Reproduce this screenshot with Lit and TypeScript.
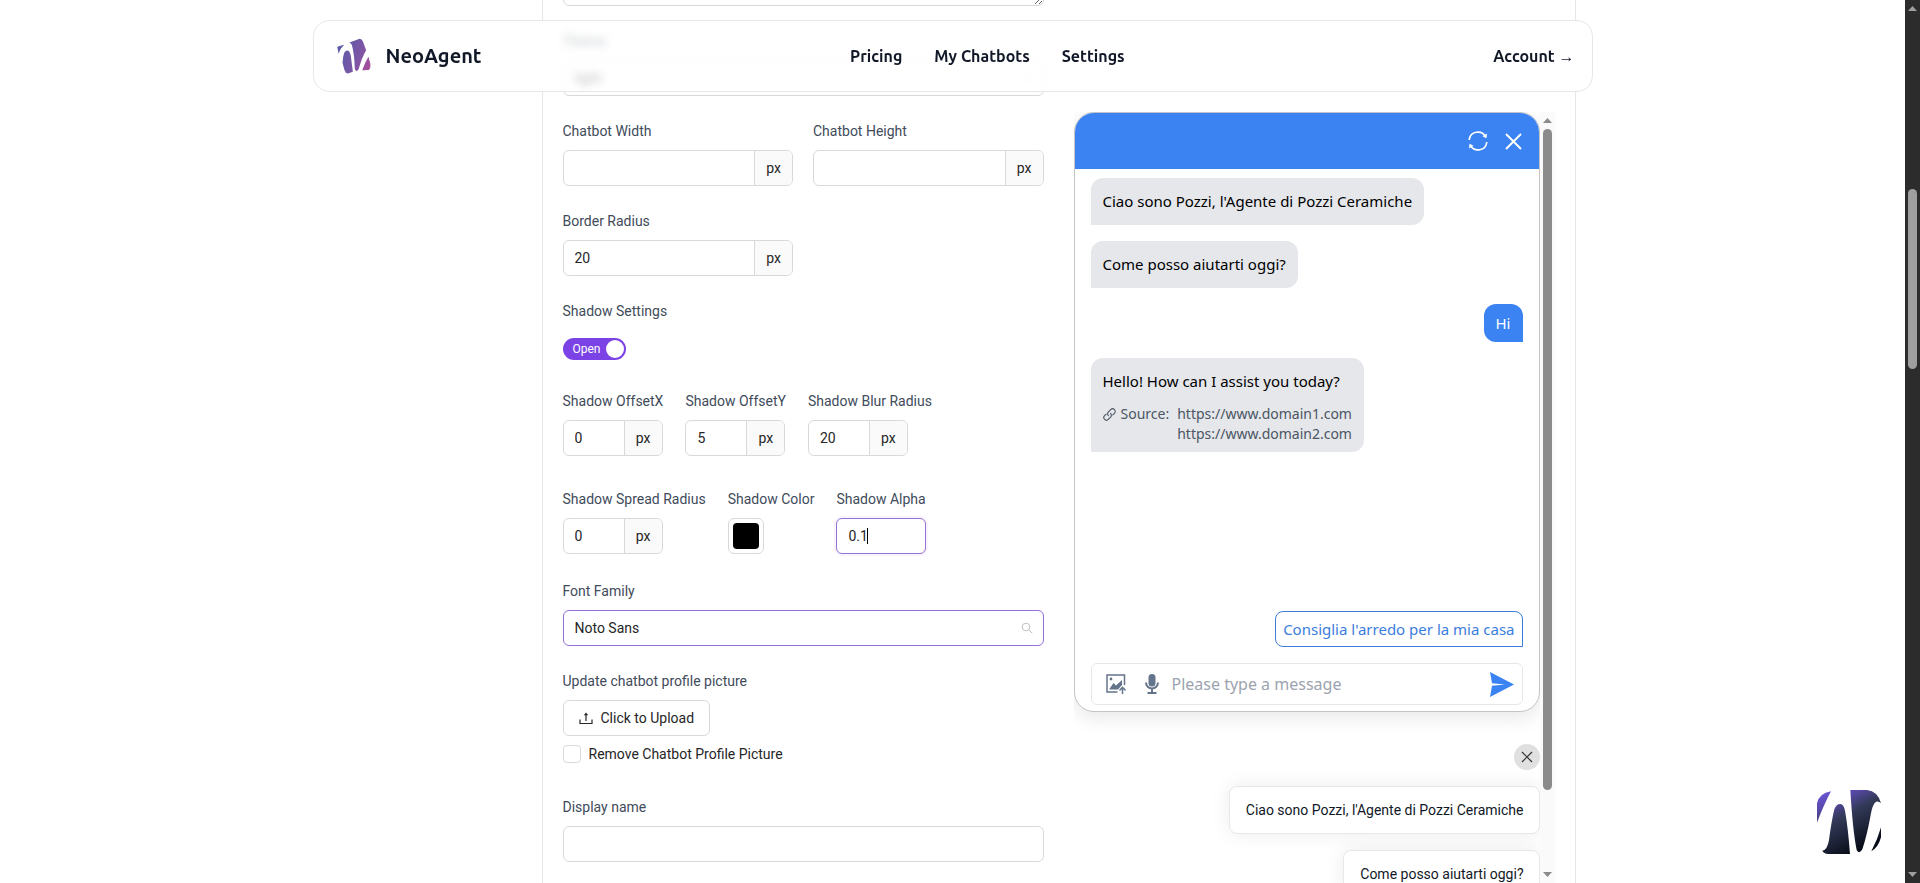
import { LitElement, html, css } from "lit";
import { customElement, property } from "lit/decorators.js";

@customElement("unit-field")
class UnitField extends LitElement {
  @property() label = "";
  @property() value = "";
  @property({ type: Boolean, reflect: true }) compact = false;

  static styles = css`
    :host { display: flex; flex-direction: column; gap: 8px; min-width: 0; }
    label { font-size: 14px; line-height: 22px; color: #414b5a; white-space: nowrap; }
    .group { display: flex; height: 36px; box-sizing: border-box; border: 1px solid #d9d9d9; border-radius: 6px; overflow: hidden; background: #fff; }
    :host([compact]) .group { width: 100px; }
    input { flex: 1; min-width: 0; border: 0; outline: 0; padding: 0 11px; font: 14px Roboto, sans-serif; color: #262626; background: transparent; }
    .unit { box-sizing: border-box; width: 38px; flex: none; border-left: 1px solid #d9d9d9; background: #fafafa; display: grid; place-items: center; font-size: 14px; color: #262626; }
  `;

  render() {
    return html`
      <label for="field">${this.label}</label>
      <div class="group">
        <input id="field" type="text" .value=${this.value} />
        <span class="unit">px</span>
      </div>
    `;
  }
}

@customElement("scroll-rail")
class ScrollRail extends LitElement {
  @property({ reflect: true }) tone = "light";

  static styles = css`
    :host { display: grid; grid-template-rows: 17px 0fr 660fr 76fr 17px; justify-items: center; width: 15px; background: #fafafa; color: #8b8b8b; }
    :host([tone="dark"]) { background: #2c2c2c; color: #9f9f9f; grid-template-rows: 17px 172fr 180fr 497fr 17px; }
    .thumb { grid-row: 3; width: 9px; border-radius: 5px; background: currentColor; }
    svg { width: 9px; height: 5px; align-self: center; }
    .down { grid-row: 5; }
  `;

  render() {
    return html`
      <svg viewBox="0 0 9 5" aria-hidden="true"><path d="M0 5 4.500 0 9 5z" fill="currentColor" /></svg>
      <div class="thumb"></div>
      <svg class="down" viewBox="0 0 9 5" aria-hidden="true"><path d="M0 0h9L4.500 5z" fill="currentColor" /></svg>
    `;
  }
}

@customElement("site-header")
class SiteHeader extends LitElement {
  static styles = css`
    :host { display: flex; justify-content: space-between; align-items: center; box-sizing: border-box; height: 72px; padding: 0 17px 0 23px; border: 1px solid #e5e7eb; border-radius: 16px; background: rgba(255, 255, 255, 0.7); backdrop-filter: blur(4px); font-family: Ubuntu, "Noto Sans", sans-serif; }
    a { color: #111827; text-decoration: none; font-size: 16px; line-height: 24px; font-weight: 600; white-space: nowrap; }
    .brand { display: flex; align-items: center; gap: 15px; font-size: 20px; line-height: 28px; }
    .brand svg { width: 34px; height: 36px; }
    nav { display: flex; gap: 32px; }
  `;

  render() {
    return html`
      <a class="brand" href="#">
        <svg viewBox="0 0 105 108" aria-hidden="true">
          <defs>
            <linearGradient id="v" x1="0" y1="50" x2="105" y2="90" gradientUnits="userSpaceOnUse">
              <stop offset="0" stop-color="#5c5aa6" /><stop offset="0.55" stop-color="#7a56a6" /><stop offset="1" stop-color="#ab4c98" />
            </linearGradient>
          </defs>
          <g fill="url(#v)">
            <path d="M1 27Q2 24 8 23L22 19Q9 31 5 47Z" />
            <path d="M22 45Q27 34 35 38Q42 42 44 64L49 103L34 108Q26 107 23 97L17 75Q18 57 22 45Z" />
            <path d="M38 12L70 1Q77 1 80 9L90 36Q77 58 67 94Q60 106 55 94Q54 50 46 20Q43 14 38 12Z" />
            <path d="M97 56L103 78Q104 93 98 97L78 98Q85 76 97 56Z" />
          </g>
        </svg>
        NeoAgent
      </a>
      <nav>
        <a href="#">Pricing</a>
        <a href="#">My Chatbots</a>
        <a href="#">Settings</a>
      </nav>
      <a href="#">Account →</a>
    `;
  }
}

@customElement("style-form")
class StyleForm extends LitElement {
  static styles = css`
    :host { display: flex; flex-direction: column; gap: 24px; min-width: 0; color: #262626; font-size: 14px; line-height: 22px; }
    .row { display: grid; grid-template-columns: 1fr 1fr; gap: 20px; }
    .inline { display: flex; gap: 22px; margin-bottom: 2px; }
    .spaced { margin-bottom: 8px; }
    .field { display: flex; flex-direction: column; gap: 8px; }
    label, .caption { color: #414b5a; white-space: nowrap; }
    input[type="text"], select, textarea { box-sizing: border-box; width: 100%; height: 36px; border: 1px solid #d9d9d9; border-radius: 6px; padding: 0 11px; font: 14px Roboto, sans-serif; color: #262626; background: #fff; outline: 0; appearance: none; display: block; }
    textarea { height: 64px; margin-top: -58px; }
    .wrap { position: relative; }
    .wrap svg { position: absolute; right: 11px; top: 12px; width: 12px; height: 12px; pointer-events: none; }
    .active input[type="text"], .active select { border-color: #9570d5; }
    .alpha { width: 90px; }
    .alpha input[type="text"] { box-shadow: 0 0 0 2px rgba(149, 112, 213, 0.08); }
    .caret { position: absolute; left: 31px; top: 10px; width: 1px; height: 16px; background: #000; }
    .switch { display: flex; align-items: center; box-sizing: border-box; height: 36px; padding-top: 2px; }
    .toggle { display: flex; align-items: center; justify-content: space-between; width: 63px; height: 22px; padding: 0 2px 0 10px; border: 0; border-radius: 11px; background: #7b43e5; color: #fff; font: 12px Roboto, sans-serif; }
    .knob { width: 18px; height: 18px; border-radius: 9px; background: #fff; }
    .swatch { box-sizing: border-box; width: 36px; height: 36px; padding: 4px; border: 1px solid #d9d9d9; border-radius: 6px; background: #fff; appearance: none; }
    .swatch::-webkit-color-swatch-wrapper { padding: 0; }
    .swatch::-webkit-color-swatch { border: 0; border-radius: 4px; }
    .upload { display: flex; align-items: center; gap: 8px; align-self: start; height: 36px; padding: 0 15px; border: 1px solid #d9d9d9; border-radius: 6px; background: #fff; font: 14px Roboto, sans-serif; color: #262626; }
    .upload svg { width: 14px; height: 14px; }
    .check { display: flex; align-items: center; gap: 8px; line-height: 20px; color: #262626; }
    .check input { appearance: none; width: 18px; height: 18px; margin: 0; border: 1px solid #d9d9d9; border-radius: 4px; background: #fff; box-sizing: border-box; }
    .picture { margin-bottom: 8px; }
  `;

  render() {
    return html`
      <div class="field"><textarea aria-label="Prompt"></textarea></div>
      <div class="field">
        <label for="theme">Theme</label>
        <div class="wrap">
          <select id="theme"><option>light</option></select>
          <svg viewBox="0 0 12 12" fill="none" stroke="#bfbfbf"><path d="m1.500 3.500 4.500 5 4.500-5" /></svg>
        </div>
      </div>
      <div class="row">
        <unit-field label="Chatbot Width"></unit-field>
        <unit-field label="Chatbot Height"></unit-field>
      </div>
      <div class="row"><unit-field label="Border Radius" value="20"></unit-field></div>
      <div class="field">
        <span class="caption" id="shadow">Shadow Settings</span>
        <div class="switch">
          <button class="toggle" role="switch" aria-checked="true" aria-labelledby="shadow">Open<span class="knob"></span></button>
        </div>
      </div>
      <div class="inline spaced">
        <unit-field compact label="Shadow OffsetX" value="0"></unit-field>
        <unit-field compact label="Shadow OffsetY" value="5"></unit-field>
        <unit-field compact label="Shadow Blur Radius" value="20"></unit-field>
      </div>
      <div class="inline">
        <unit-field compact label="Shadow Spread Radius" value="0"></unit-field>
        <div class="field">
          <label for="color">Shadow Color</label>
          <input class="swatch" id="color" type="color" value="#000000" />
        </div>
        <div class="field">
          <label for="alpha">Shadow Alpha</label>
          <div class="wrap active alpha"><input id="alpha" type="text" value="0.1" /><span class="caret"></span></div>
        </div>
      </div>
      <div class="field">
        <label for="font">Font Family</label>
        <div class="wrap active">
          <select id="font"><option>Noto Sans</option></select>
          <svg viewBox="0 0 12 12" fill="none" stroke="#bfbfbf"><circle cx="5" cy="5" r="3.800" /><path d="m7.800 7.800 3.500 3.500" /></svg>
        </div>
      </div>
      <div class="field picture">
        <span class="caption">Update chatbot profile picture</span>
        <button class="upload">
          <svg viewBox="0 0 14 14" fill="none" stroke="#262626" stroke-width="1.200"><path d="M1 8.500v4h12v-4M7 10V3.500" /><path d="M4.800 4.300 7 1.500l2.200 2.800z" fill="#262626" stroke="none" /></svg>
          Click to Upload
        </button>
        <label class="check"><input type="checkbox" />Remove Chatbot Profile Picture</label>
      </div>
      <div class="field">
        <label for="name">Display name</label>
        <input id="name" type="text" />
      </div>
    `;
  }
}

@customElement("chat-preview")
class ChatPreview extends LitElement {
  static styles = css`
    :host { display: block; min-width: 0; overflow: hidden; font-family: "Noto Sans", sans-serif; }
    button { border: 0; padding: 0; background: none; display: block; }
    svg { display: block; }
    .card { box-sizing: border-box; height: 600px; display: flex; flex-direction: column; border: 1px solid #c4c4c4; border-radius: 20px; overflow: hidden; background: #fff; box-shadow: 0 5px 20px rgba(0, 0, 0, 0.1); }
    .bar { flex: none; display: flex; align-items: center; justify-content: flex-end; gap: 17px; height: 56px; padding: 0 17px; background: #3b83f2; }
    .log { flex: 1; display: flex; flex-direction: column; align-items: flex-start; gap: 16px; padding: 9px 16px 16px; }
    .bubble { border-radius: 12px 12px 12px 0; background: #e5e7eb; color: #000; font-size: 15px; line-height: 23px; padding: 12px; white-space: nowrap; }
    .mine { align-self: flex-end; border-radius: 12px 12px 0 12px; background: #3b83f2; color: #fff; padding: 9px 12px; line-height: 20px; }
    .source { display: flex; gap: 8px; margin-top: 11px; font-size: 14px; line-height: 20px; color: #4b5563; }
    .tag { display: flex; gap: 5px; align-self: flex-start; align-items: center; }
    .links { display: flex; flex-direction: column; }
    .links a { color: inherit; text-decoration: none; }
    .answer { padding: 12px 12px 8px; }
    .suggest { align-self: flex-end; margin-top: auto; height: 36px; box-sizing: border-box; padding: 0 7px; border: 1px solid #3b7ddd; border-radius: 8px 8px 0 8px; color: #3b7ddd; font: 15px "Noto Sans", sans-serif; white-space: nowrap; }
    .compose { flex: none; display: flex; align-items: center; gap: 10px; height: 42px; box-sizing: border-box; margin: 0 16px 6px; padding: 0 8px 0 14px; border: 1px solid #e5e7eb; border-radius: 6px; }
    .tools { display: flex; gap: 16px; }
    .compose input { flex: 1; min-width: 0; border: 0; outline: 0; padding: 0; font: 16px "Noto Sans", sans-serif; background: none; }
    .compose input::placeholder { color: #9ca3af; }
    .popups { display: flex; flex-direction: column; align-items: flex-end; gap: 16px; margin-top: 32px; font-family: Roboto, sans-serif; }
    .dismiss { width: 26px; height: 26px; border-radius: 13px; background: #e0e0e0; display: grid; place-items: center; }
    .pop { box-sizing: border-box; height: 48px; padding: 0 15px 0 16px; display: flex; align-items: center; border: 1px solid #e8e8e8; border-radius: 8px; background: #fff; box-shadow: 0 0 20px rgba(0, 0, 0, 0.08); font-size: 14px; line-height: 20px; color: #111827; white-space: nowrap; }
  `;

  render() {
    return html`
      <section class="card">
        <div class="bar">
          <button aria-label="Restart">
            <svg width="20" height="20" viewBox="0 0 20 20" fill="none" stroke="#fff" stroke-width="1.700"><path d="M1.200 9A8.700 8.700 0 0 1 17.600 5.800M18.800 11A8.700 8.700 0 0 1 2.400 14.200" /><path d="m19 2.500-.5 4.700-4-2z M1 17.500l.5-4.700 4 2z" fill="#fff" stroke="none" /></svg>
          </button>
          <button aria-label="Close">
            <svg width="17" height="17" viewBox="0 0 17 17" stroke="#fff" stroke-width="1.900"><path d="m1 1 15 15M16 1 1 16" /></svg>
          </button>
        </div>
        <div class="log">
          <div class="bubble">Ciao sono Pozzi, l'Agente di Pozzi Ceramiche</div>
          <div class="bubble">Come posso aiutarti oggi?</div>
          <div class="bubble mine">Hi</div>
          <div class="bubble answer">
            Hello! How can I assist you today?
            <div class="source">
              <span class="tag">
                <svg width="13" height="13" viewBox="0 0 13 13" fill="none" stroke="#4b5563" stroke-width="1.100" stroke-linecap="round"><path d="M5.400 7.600a2.600 2.600 0 0 1 0-3.700l2.300-2.300a2.600 2.600 0 0 1 3.700 3.700L9.800 6.900" /><path d="M7.600 5.400a2.600 2.600 0 0 1 0 3.700l-2.300 2.300a2.600 2.600 0 0 1-3.700-3.700l1.600-1.600" /></svg>
                Source:
              </span>
              <span class="links"><a href="#">https://www.domain1.com</a><a href="#">https://www.domain2.com</a></span>
            </div>
          </div>
          <button class="suggest">Consiglia l'arredo per la mia casa</button>
        </div>
        <div class="compose">
          <div class="tools">
            <button aria-label="Attach image">
              <svg width="20" height="20" viewBox="0 0 20 20" fill="none" stroke="#64748b" stroke-width="1.500"><path d="M11.500 18H1V1h17.500v10" /><path d="M3 15.500 7.500 9l2.500 2.500L16 6v5l-4 4.500z" fill="#64748b" stroke="none" /><circle cx="5" cy="5" r="1.400" fill="#64748b" stroke="none" /><path d="M16.500 20v-6M13.500 16.500l3-3.200 3 3.200" /></svg>
            </button>
            <button aria-label="Record voice">
              <svg width="20" height="20" viewBox="0 0 20 20" fill="none" stroke="#64748b" stroke-width="2"><rect x="6.500" y="0" width="7" height="12.500" rx="3.500" fill="#64748b" stroke="none" /><path d="M4 8.500a6 6 0 0 0 12 0M10 14.500V19M5.500 19h9" /></svg>
            </button>
          </div>
          <input type="text" aria-label="Message" placeholder="Please type a message" />
          <button aria-label="Send">
            <svg width="25" height="25" viewBox="0 0 25 25"><path d="M1 0 25 12.500 1 25 3 13.800 16 12.500 3 11.200z" fill="#3b83f2" /></svg>
          </button>
        </div>
      </section>
      <div class="popups">
        <button class="dismiss" aria-label="Dismiss">
          <svg width="12" height="12" viewBox="0 0 12 12" stroke="#333" stroke-width="1.200"><path d="m1 1 10 10M11 1 1 11" /></svg>
        </button>
        <div class="pop">Ciao sono Pozzi, l'Agente di Pozzi Ceramiche</div>
        <div class="pop">Come posso aiutarti oggi?</div>
      </div>
    `;
  }
}

@customElement("app-root")
class AppRoot extends LitElement {
  static styles = css`
    :host { display: grid; grid-template-columns: minmax(0, 1fr) 15px; height: 100vh; overflow: hidden; background: #fff; font-family: Roboto, sans-serif; }
    main { position: relative; min-width: 0; overflow: hidden; }
    site-header { position: absolute; z-index: 2; top: 20px; left: 0; right: 0; width: 100%; max-width: 1280px; margin: 0 auto; }
    .page { display: grid; grid-template-columns: 229px minmax(0, 1fr); box-sizing: border-box; max-width: 1280px; height: 100%; margin: 0 auto; padding-right: 17px; }
    .panel { grid-column: 2; display: grid; grid-template-columns: minmax(0, 1fr) minmax(0, 1fr); gap: 30px; min-height: 0; padding: 0 20px; border: solid #e5e7eb; border-width: 0 1px; overflow: hidden; }
    .preview { display: grid; grid-template-columns: minmax(0, 1fr) 15px; grid-template-rows: minmax(0, 1fr); min-height: 0; margin-top: 112px; }
    .launcher { position: absolute; z-index: 3; right: 24px; bottom: 29px; width: 64px; height: 64px; padding: 0; border: 0; background: none; }
    .launcher svg { display: block; width: 64px; height: 64px; }
  `;

  render() {
    return html`
      <main>
        <site-header></site-header>
        <div class="page">
          <section class="panel">
            <style-form></style-form>
            <div class="preview">
              <chat-preview></chat-preview>
              <scroll-rail tone="light"></scroll-rail>
            </div>
          </section>
        </div>
        <button class="launcher" aria-label="Open chat">
          <svg viewBox="0 0 192 192" aria-hidden="true">
            <defs>
              <linearGradient id="n" x1="20" y1="0" x2="120" y2="190" gradientUnits="userSpaceOnUse">
                <stop offset="0" stop-color="#6d56d8" /><stop offset="0.200" stop-color="#5a4aae" /><stop offset="0.450" stop-color="#333a58" /><stop offset="1" stop-color="#060a14" />
              </linearGradient>
            </defs>
            <g fill="url(#n)">
              <path d="M0 98V40Q6 10 42 4Q20 45 0 98Z" />
              <path d="M99 192H32Q18 189 16 182Q31 180 36 150Q44 90 52 58Q58 42 70 42Q80 43 84 62Q93 112 99 192Z" />
              <path d="M100 0H150Q182 3 192 40Q185 32 177 35Q166 42 160 80Q150 135 136 178Q127 194 119 180Q107 120 100 0Z" />
              <path d="M192 112V142Q184 172 163 184Q182 148 192 112Z" />
            </g>
          </svg>
        </button>
      </main>
      <scroll-rail tone="dark"></scroll-rail>
    `;
  }
}
